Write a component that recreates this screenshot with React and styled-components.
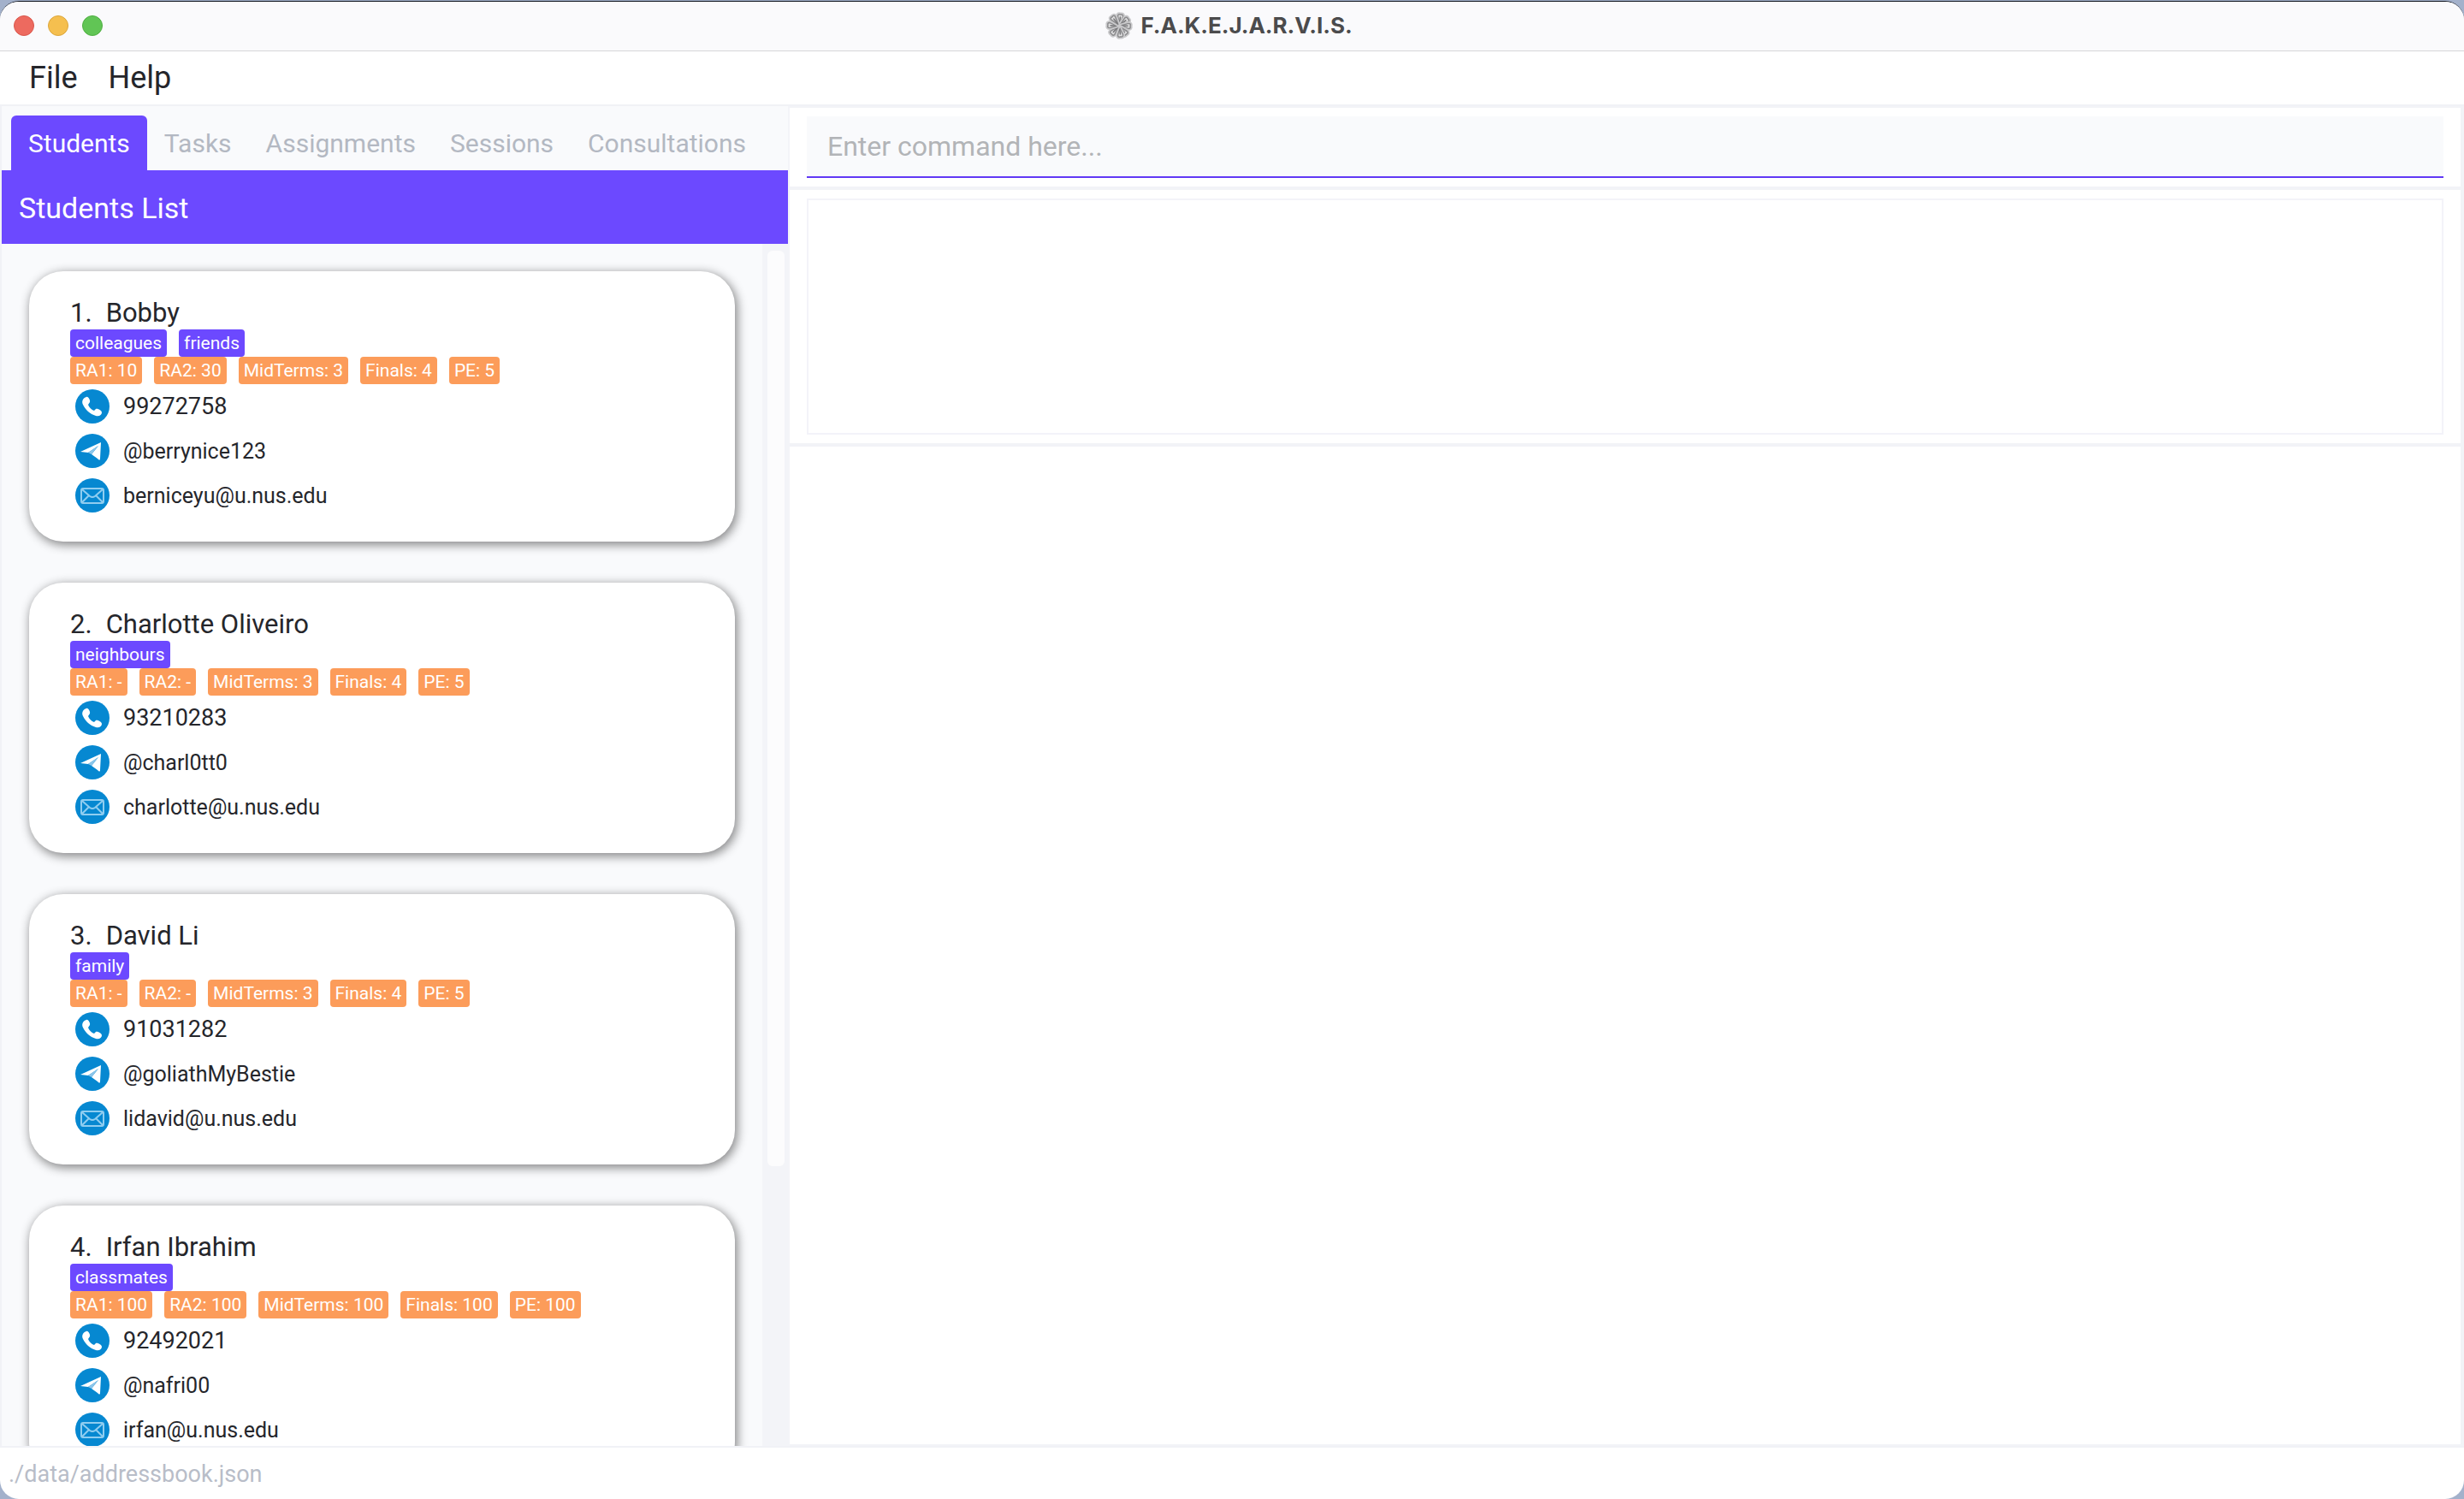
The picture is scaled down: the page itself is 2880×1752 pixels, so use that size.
import React, { useState } from "react";
import styled, { createGlobalStyle } from "styled-components";

const GlobalStyle = createGlobalStyle`
  *, *::before, *::after { box-sizing: border-box; }
  body {
    margin: 0;
    background: #a3b1cb;
    font-family: Roboto, "Liberation Sans", sans-serif;
    color: #25262b;
  }
  button, input { font: inherit; color: inherit; }
`;

const Window = styled.div`
  display: flex;
  flex-direction: column;
  height: 100vh;
  border-top: 1px solid #a3b1cb;
`;

const Frame = styled.div`
  flex: 1;
  min-height: 0;
  display: flex;
  flex-direction: column;
  overflow: hidden;
  border-top: 1px solid #10151f;
  border-radius: 22px;
  background: #fff;
`;

const TitleBar = styled.header`
  display: flex;
  align-items: center;
  flex: none;
  height: 58px;
  padding: 0 24px 2px 16px;
  background: #fafafc;
  border-bottom: 1px solid #d6d6d9;
`;

const Side = styled.div`
  flex: 1;
  display: flex;
  gap: 16px;
`;

const Light = styled.button`
  width: 24px;
  height: 24px;
  padding: 0;
  border: 1px solid ${(p) => p.$edge};
  border-radius: 50%;
  background: ${(p) => p.$fill};
`;

const Title = styled.h1`
  display: flex;
  align-items: center;
  gap: 8px;
  margin: 0;
  font: 700 26px/32px Inter, sans-serif;
  color: #4b4b4c;
`;

const MenuBar = styled.nav`
  display: flex;
  flex: none;
  height: 62px;
  padding: 0 16px;
`;

const MenuItem = styled.button`
  padding: 0 18px;
  border: 0;
  background: none;
  font-size: 36px;
  line-height: 60px;
`;

const Main = styled.main`
  flex: 1;
  min-height: 0;
  display: flex;
  border: solid #f1f2f6;
  border-width: 2px 0 2px 2px;
`;

const LeftPane = styled.section`
  flex: 0 0 32%;
  min-width: 0;
  display: flex;
  flex-direction: column;
  border-right: 2px solid #f3f4f8;
  background: #f9fafc;
`;

const Tabs = styled.div`
  display: flex;
  align-items: flex-end;
  flex: none;
  height: 75px;
  padding-left: 11px;
`;

const Tab = styled.button`
  height: 64px;
  padding: 0 20px;
  border: 0;
  border-radius: 6px 6px 0 0;
  font-size: 30px;
  line-height: 66px;
  background: ${(p) => (p.$active ? "#6c49ff" : "transparent")};
  color: ${(p) => (p.$active ? "#fff" : "#b3b8c2")};
`;

const ListTitle = styled.h2`
  flex: none;
  height: 86px;
  margin: 0;
  padding: 0 20px;
  background: #6c49ff;
  color: #fff;
  font-size: 34px;
  font-weight: 400;
  line-height: 88px;
`;

const ListArea = styled.div`
  flex: 1;
  min-height: 0;
  display: flex;
`;

const Cards = styled.ul`
  flex: 1;
  display: flex;
  flex-direction: column;
  gap: 48px;
  margin: 0;
  padding: 32px;
  overflow: hidden;
  list-style: none;
`;

const Card = styled.li`
  flex: none;
  height: 316px;
  padding: 32px 48px;
  border-radius: 40px;
  background: #fff;
  box-shadow: 2px 3px 12px 1px rgba(0, 0, 0, 0.46);
`;

const Name = styled.h3`
  display: flex;
  gap: 16px;
  margin: 0;
  padding-bottom: 2px;
  font-size: 31px;
  font-weight: 400;
  line-height: 34px;
`;

const TagRow = styled.div`
  display: flex;
  gap: 14px;
`;

const Tag = styled.span`
  padding: 0 6px;
  border-radius: 4px;
  background: ${(p) => (p.$score ? "#fc9c5a" : "#6c49ff")};
  color: #fff;
  font-size: 21px;
  line-height: 32px;
`;

const Contacts = styled.div`
  display: flex;
  flex-direction: column;
  gap: 12px;
  padding: 6px;
`;

const Contact = styled.div`
  display: flex;
  align-items: center;
  gap: 16px;
  height: 40px;
  font-size: ${(p) => (p.$numeric ? "27px" : "25px")};
`;

const Track = styled.div`
  flex: none;
  width: 30px;
  padding: 8px 4px 8px 6px;
  background: #f3f4f8;
`;

const Thumb = styled.div`
  height: 77%;
  border-radius: 6px;
  background: #fcfcfd;
`;

const RightPane = styled.section`
  flex: 1;
  min-width: 0;
  display: flex;
  flex-direction: column;
  gap: 4px;
  padding: 2px 4px 2px 0;
  background: #f2f3f7;
`;

const Panel = styled.div`
  flex: ${(p) => (p.$grow ? "1" : "none")};
  padding: 10px 20px;
  background: #fff;
`;

const CommandInput = styled.input`
  display: block;
  width: 100%;
  height: 72px;
  padding: 0 24px;
  border: 0;
  border-bottom: 2px solid #6139f5;
  border-radius: 0;
  outline: 0;
  background: #f9fafc;
  font-size: 32px;
  &::placeholder { color: #b2b4b7; opacity: 1; }
`;

const Result = styled.output`
  display: block;
  height: 276px;
  border: 2px solid #f3f3f9;
`;

const StatusBar = styled.footer`
  flex: none;
  height: 60px;
  padding: 0 10px;
  color: #b8bdc8;
  font-size: 27px;
  line-height: 62px;
`;

const Logo = () => (
  <svg width="34" height="34" viewBox="-17 -17 34 34" fill="none" strokeLinecap="round" strokeLinejoin="round" aria-hidden="true">
    {[8, 52, 92, 140, 172, 222, 272, 322].map((angle) => (
      <g key={angle} transform={`rotate(${angle})`}>
        <path d="M0 -2L-3 -11Q-3 -14 0 -13Q3 -14 3 -11Z" stroke="#c9c9cb" strokeWidth="5" />
        <path d="M0 -2L-3 -11Q-3 -14 0 -13Q3 -14 3 -11Z" fill="#dededf" stroke="#8b8b8d" strokeWidth="1.5" />
        <path d="M0 -3V-10" stroke="#77777a" strokeWidth="1.5" />
      </g>
    ))}
  </svg>
);

const shapes = {
  phone: (
    <path
      d="M13 9C9 10 7 14 9 18C12 24 17 29 24 31C28 32 31 30 31 27C31 25 26 22 24 23L22 25C19 24 16 21 15 18L17 15C18 13 15 8 13 9Z"
      fill="#fff"
    />
  ),
  telegram: (
    <>
      <path d="M6 21L30 10L29 29C29 31 28 31 26 29L19 24L27 14L15 22Z" fill="#fff" />
      <path d="M19 24L27 14L15 22Z" fill="#8cc6ea" />
    </>
  ),
  email: (
    <g fill="none" stroke="#8fcdf0" strokeWidth="2" strokeLinejoin="round">
      <rect x="7" y="12" width="26" height="17" rx="2" />
      <path d="M8 13L17 21Q20 23 23 21L32 13M8 28L16 20M32 28L24 20" />
    </g>
  ),
};

const ContactIcon = ({ kind }) => (
  <svg width="40" height="40" viewBox="0 0 40 40" role="img" aria-label={kind}>
    <circle cx="20" cy="20" r="20" fill="#0688d1" />
    {shapes[kind]}
  </svg>
);

const tabs = ["Students", "Tasks", "Assignments", "Sessions", "Consultations"];

const students = [
  {
    name: "Bobby",
    tags: ["colleagues", "friends"],
    scores: ["RA1: 10", "RA2: 30", "MidTerms: 3", "Finals: 4", "PE: 5"],
    phone: "99272758",
    telegram: "@berrynice123",
    email: "berniceyu@u.nus.edu",
  },
  {
    name: "Charlotte Oliveiro",
    tags: ["neighbours"],
    scores: ["RA1: -", "RA2: -", "MidTerms: 3", "Finals: 4", "PE: 5"],
    phone: "93210283",
    telegram: "@charl0tt0",
    email: "charlotte@u.nus.edu",
  },
  {
    name: "David Li",
    tags: ["family"],
    scores: ["RA1: -", "RA2: -", "MidTerms: 3", "Finals: 4", "PE: 5"],
    phone: "91031282",
    telegram: "@goliathMyBestie",
    email: "lidavid@u.nus.edu",
  },
  {
    name: "Irfan Ibrahim",
    tags: ["classmates"],
    scores: ["RA1: 100", "RA2: 100", "MidTerms: 100", "Finals: 100", "PE: 100"],
    phone: "92492021",
    telegram: "@nafri00",
    email: "irfan@u.nus.edu",
  },
];

const StudentCard = ({ student, index }) => (
  <Card>
    <Name>
      <span>{index}.</span>
      <span>{student.name}</span>
    </Name>
    <TagRow>
      {student.tags.map((t) => <Tag key={t}>{t}</Tag>)}
    </TagRow>
    <TagRow>
      {student.scores.map((s) => <Tag key={s} $score>{s}</Tag>)}
    </TagRow>
    <Contacts>
      {["phone", "telegram", "email"].map((kind) => (
        <Contact key={kind} $numeric={kind === "phone"}>
          <ContactIcon kind={kind} />
          <span>{student[kind]}</span>
        </Contact>
      ))}
    </Contacts>
  </Card>
);

export default function App() {
  const [active, setActive] = useState("Students");
  return (
    <Window>
      <GlobalStyle />
      <Frame>
        <TitleBar>
          <Side>
            <Light aria-label="Close" $fill="#ed6a5f" $edge="#d9564c" />
            <Light aria-label="Minimize" $fill="#f5bf4f" $edge="#dba63c" />
            <Light aria-label="Zoom" $fill="#61c555" $edge="#4fae42" />
          </Side>
          <Title>
            <Logo />
            F.A.K.E.J.A.R.V.I.S.
          </Title>
          <Side />
        </TitleBar>
        <MenuBar>
          <MenuItem>File</MenuItem>
          <MenuItem>Help</MenuItem>
        </MenuBar>
        <Main>
          <LeftPane>
            <Tabs role="tablist">
              {tabs.map((t) => (
                <Tab key={t} role="tab" aria-selected={t === active} $active={t === active} onClick={() => setActive(t)}>
                  {t}
                </Tab>
              ))}
            </Tabs>
            <ListTitle>{active} List</ListTitle>
            <ListArea>
              <Cards>
                {students.map((s, i) => <StudentCard key={s.name} student={s} index={i + 1} />)}
              </Cards>
              <Track>
                <Thumb />
              </Track>
            </ListArea>
          </LeftPane>
          <RightPane>
            <Panel>
              <CommandInput aria-label="Command" placeholder="Enter command here..." />
            </Panel>
            <Panel>
              <Result aria-label="Result" />
            </Panel>
            <Panel $grow />
          </RightPane>
        </Main>
        <StatusBar>./data/addressbook.json</StatusBar>
      </Frame>
    </Window>
  );
}
